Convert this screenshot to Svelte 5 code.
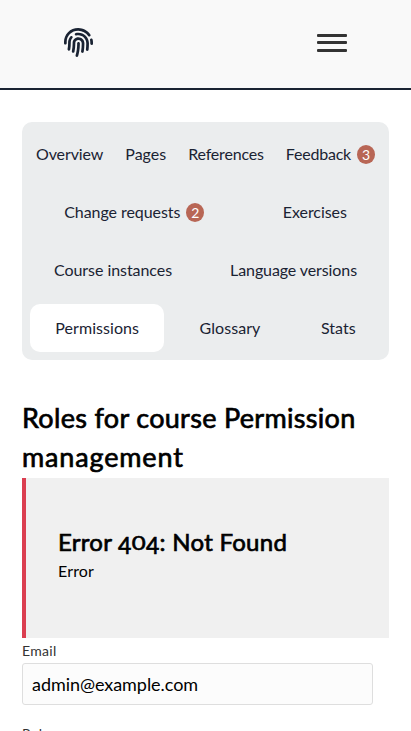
<script>
  const rows = [
    [
      { label: 'Overview', track: -0.1 },
      { label: 'Pages', track: 0 },
      { label: 'References', track: -0.18 },
      { label: 'Feedback', track: -0.2, count: 3 }
    ],
    [{ label: 'Change requests', track: -0.06, count: 2 }, { label: 'Exercises', track: -0.06 }],
    [{ label: 'Course instances', track: -0.06 }, { label: 'Language versions', track: -0.1 }],
    [{ label: 'Permissions', track: 0.06, active: true }, { label: 'Glossary', track: 0.05 }, { label: 'Stats', track: 0.05 }]
  ];
  let email = $state('admin@example.com');
</script>

<div class="page">
  <header>
    <svg class="logo" viewBox="0 0 512 512" aria-hidden="true">
      <path fill="currentColor" d="M256.12 245.96c-13.25 0-24 10.74-24 24 1.14 72.25-8.14 141.9-27.7 211.55-2.73 9.72 2.15 30.49 23.12 30.49 10.48 0 20.11-6.92 23.09-17.52 13.53-47.91 31.04-125.41 29.48-224.52.01-13.25-10.73-24-23.99-24zm-.86-81.73C194 164.16 151.25 211.3 152.1 265.32c.75 47.94-3.75 95.91-13.37 142.55-2.69 12.98 5.67 25.69 18.64 28.36 13.05 2.67 25.67-5.66 28.36-18.64 10.34-50.09 15.17-101.58 14.37-153.02-.41-25.95 19.92-52.49 54.45-52.34 31.31.47 57.15 25.34 57.62 55.47.77 48.05-2.81 96.33-10.61 143.55-2.17 13.06 6.69 25.42 19.76 27.58 19.97 3.33 26.81-15.1 27.58-19.77 8.28-50.03 12.06-101.21 11.27-152.11-.88-55.8-47.94-101.88-104.91-102.72zm-110.69-19.78c-10.3-8.34-25.37-6.8-33.76 3.48-25.62 31.5-39.39 71.28-38.75 112 .59 37.58-2.47 75.27-9.11 112.05-2.34 13.05 6.31 25.53 19.36 27.89 20.11 3.5 27.07-14.81 27.89-19.36 7.19-39.84 10.5-80.66 9.86-121.33-.47-29.88 9.2-57.88 28-80.97 8.35-10.28 6.79-25.39-3.49-33.76zm109.47-62.33c-15.41-.41-30.87 1.44-45.78 4.97-12.89 3.06-20.87 15.98-17.83 28.89 3.06 12.89 16 20.83 28.89 17.83 11.05-2.61 22.47-3.77 34-3.69 75.43 1.13 137.73 61.5 138.88 134.58.59 37.88-1.28 76.11-5.58 113.63-1.5 13.17 7.95 25.08 21.11 26.58 16.72 1.95 25.51-11.88 26.58-21.11a929.06 929.06 0 0 0 5.89-119.85c-1.56-98.75-85.07-180.33-186.16-181.83zm252.07 121.45c-2.86-12.92-15.51-21.2-28.61-18.27-12.94 2.86-21.12 15.66-18.26 28.61 4.71 21.41 4.91 37.41 4.7 61.6-.11 13.27 10.55 24.09 23.8 24.2h.2c13.17 0 23.89-10.61 24-23.8.18-22.18.4-44.11-5.83-72.34zm-40.12-90.72C417.29 43.46 337.6 1.29 252.81.02 183.02-.82 118.47 24.91 70.46 72.94 24.09 119.37-.9 181.04.14 246.65l-.12 21.47c-.39 13.25 10.03 24.31 23.28 24.69.23.02.48.02.72.02 12.92 0 23.59-10.3 23.97-23.3l.16-23.64c-.83-52.5 19.16-101.86 56.28-139 38.76-38.8 91.34-59.67 147.68-58.86 69.45 1.03 134.73 35.56 174.62 92.39 7.61 10.86 22.56 13.45 33.42 5.86 10.84-7.62 13.46-22.59 5.84-33.43z" />
    </svg>
    <button class="menu" aria-label="Menu"><i></i><i></i><i></i></button>
  </header>

  <main>
    <nav>
      {#each rows as row}
        <div class="row">
          {#each row as tab}
            <a href="#top" class:active={tab.active} style:letter-spacing={`${tab.track}px`}>
              {tab.label}{#if tab.count}<span class="badge">{tab.count}</span>{/if}
            </a>
          {/each}
        </div>
      {/each}
    </nav>

    <h1><span class="l1">Roles for course Permission</span> <span class="l2">management</span></h1>

    <section class="error">
      <h2>Error <span class="four">4</span><span class="zero">0</span><span class="four">4</span>: Not Found</h2>
      <p>Error</p>
    </section>

    <label for="email">Email</label>
    <input id="email" bind:value={email} />
    <label class="role" for="role">Role</label>
  </main>
</div>

<style>
  :global(body) { background: #fff; overflow: hidden; }
  .page { height: 731px; overflow: hidden; font: 16px/24px Lato, sans-serif; color: #000; }
  header {
    box-sizing: border-box; height: 90px; padding: 0 64px 3px;
    display: flex; align-items: center; justify-content: space-between;
    background: #f9f9f9; border-bottom: 2px solid #1a2333;
  }
  .logo { width: 29px; height: 29px; color: #1a2333; }
  .menu {
    display: flex; flex-direction: column; gap: 4.5px;
    width: 30px; padding: 0; border: 0; background: none;
  }
  .menu i { height: 3px; border-radius: 1px; background: #333; }
  main { padding: 32px 22px 0; }
  nav {
    display: flex; flex-direction: column; gap: 10px;
    padding: 8px; border-radius: 10px; background: #ebedee;
  }
  .row { display: flex; gap: 10px; }
  a {
    flex: 1 1 auto; display: flex; align-items: center; justify-content: center;
    height: 48px; border-radius: 10px; color: #1a2333; text-decoration: none; white-space: nowrap;
  }
  .active { background: #fff; }
  .badge {
    width: 18px; height: 19px; margin-left: 6px; border-radius: 50%; letter-spacing: 0;
    background: #b86655; color: #fff; font-size: 14px; line-height: 19px; text-align: center;
  }
  h1, h2 { margin: 0; font-weight: 400; white-space: nowrap; -webkit-text-stroke: 0.7px #000; }
  h1 { padding: 38px 0 2px; font-size: 27px; line-height: 39px; }
  h1 span { display: block; }
  .l1 { letter-spacing: 0.31px; }
  .l2 { letter-spacing: 0.85px; }
  .error {
    box-sizing: border-box; height: 160px; padding: 47px 32px;
    border-left: 4px solid #db3e50; background: #f0f0f0;
  }
  h2 { font-size: 24px; line-height: 33px; letter-spacing: 0.27px; }
  .four { display: inline-block; font-size: 23px; line-height: 20px; transform: translateY(3px); }
  .zero { display: inline-block; line-height: 20px; transform: scaleY(0.76); transform-origin: 50% 83%; }
  p { margin: 1px 0 0; letter-spacing: 0.15px; }
  label { display: block; font-size: 14px; line-height: 25px; letter-spacing: 0.3px; color: #333; }
  input {
    display: block; box-sizing: border-box; width: 351px; height: 42px; padding: 0 9px 1px;
    border: 1px solid #dedede; border-radius: 3px; background: #fcfcfc;
    font: 18px Lato, sans-serif; letter-spacing: -0.05px; color: #000;
  }
  .role { margin-top: 16px; }
</style>
